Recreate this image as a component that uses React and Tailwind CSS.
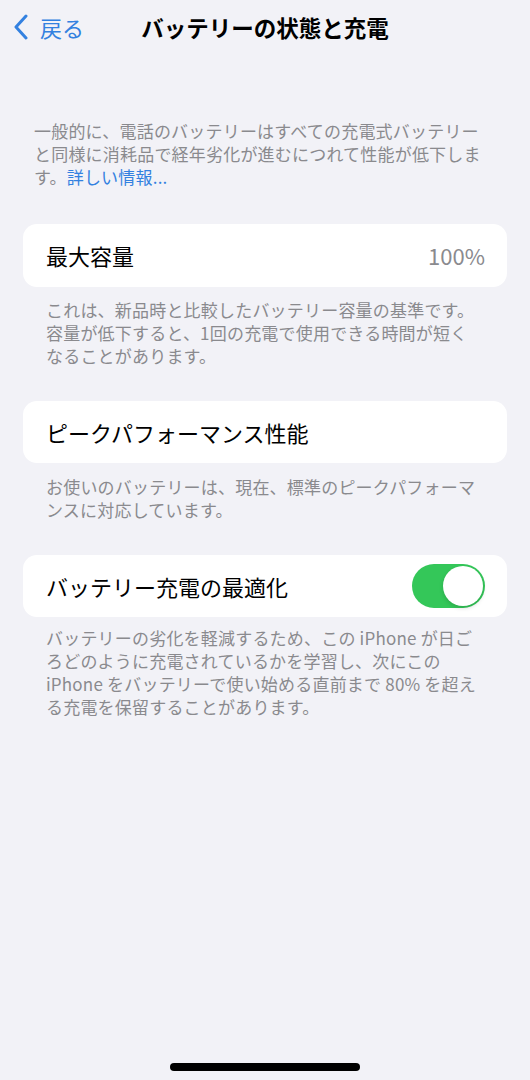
import React, { useState } from 'react'

const font = { fontFamily: '"Noto Sans CJK JP", "Noto Sans", sans-serif' }

const Footnote = ({ lines, className = '' }) => (
  <p className={`px-[46px] text-[17px] leading-[23px] text-[#8a8a8e] tracking-[0.2px] ${className}`}>
    {lines.map((line, i) => (
      <span key={i} className="block whitespace-pre">{line}</span>
    ))}
  </p>
)

const Toggle = ({ on, onChange }) => (
  <button
    onClick={() => onChange(!on)}
    className={`relative w-[73px] h-[44px] rounded-full transition-colors ${on ? 'bg-[#34c759]' : 'bg-[#e5e5ea]'}`}
  >
    <span
      className={`absolute top-[2px] w-[40px] h-[40px] rounded-full bg-white shadow-[0_2px_4px_rgba(0,0,0,0.15)] transition-all ${on ? 'left-[31px]' : 'left-[2px]'}`}
    />
  </button>
)

const BatteryHealth = () => {
  const [optimized, setOptimized] = useState(true)

  return (
    <div className="h-[1080px] bg-[#f2f2f7] flex flex-col" style={font}>
      {/* Nav bar */}
      <div className="h-[54px] grid grid-cols-[1fr_auto_1fr] items-center">
        <button className="justify-self-start flex items-center gap-[11px] pl-[13px] text-[#3381e0]">
          <svg width="16" height="26" viewBox="0 0 16 26" fill="none">
            <path d="M13 2 L3 13 L13 24" stroke="currentColor" strokeWidth="3" strokeLinecap="round" strokeLinejoin="round" />
          </svg>
          <span className="text-[22px] leading-none">戻る</span>
        </button>
        <h1 className="text-[22.5px] font-bold text-black leading-none">バッテリーの状態と充電</h1>
        <div />
      </div>

      {/* Intro */}
      <p className="mt-[65px] px-[34px] text-[17px] leading-[23px] text-[#8a8a8e] tracking-[0.2px]">
        <span className="block whitespace-nowrap">一般的に、電話のバッテリーはすべての充電式バッテリー</span>
        <span className="block whitespace-nowrap">と同様に消耗品で経年劣化が進むにつれて性能が低下しま</span>
        <span className="block whitespace-nowrap">
          す。<span className="text-[#3381e0]">詳しい情報...</span>
        </span>
      </p>

      {/* Maximum capacity */}
      <div className="mt-[36px] mx-[23px] h-[63px] bg-white rounded-[14px] flex items-center justify-between pl-[23px] pr-[22px]">
        <span className="text-[22px] text-black">最大容量</span>
        <span className="text-[22px] text-[#8a8a8e]">100%</span>
      </div>
      <Footnote
        className="mt-[11px]"
        lines={[
          'これは、新品時と比較したバッテリー容量の基準です。',
          '容量が低下すると、1回の充電で使用できる時間が短く',
          'なることがあります。',
        ]}
      />

      {/* Peak performance */}
      <div className="mt-[34px] mx-[23px] h-[62px] bg-white rounded-[14px] flex items-center pl-[23px]">
        <span className="text-[22px] text-black">ピークパフォーマンス性能</span>
      </div>
      <Footnote
        className="mt-[12px]"
        lines={[
          'お使いのバッテリーは、現在、標準のピークパフォーマ',
          'ンスに対応しています。',
        ]}
      />

      {/* Optimized charging */}
      <div className="mt-[34px] mx-[23px] h-[62px] bg-white rounded-[14px] flex items-center justify-between pl-[23px] pr-[22px]">
        <span className="text-[22px] text-black">バッテリー充電の最適化</span>
        <Toggle on={optimized} onChange={setOptimized} />
      </div>
      <Footnote
        className="mt-[9px]"
        lines={[
          'バッテリーの劣化を軽減するため、この iPhone が日ご',
          'ろどのように充電されているかを学習し、次にこの',
          'iPhone をバッテリーで使い始める直前まで 80% を超え',
          'る充電を保留することがあります。',
        ]}
      />

      {/* Home indicator */}
      <div className="mt-auto mb-[9px] self-center w-[190px] h-[8px] rounded-full bg-black" />
    </div>
  )
}

export default function App() {
  return <BatteryHealth />
}
